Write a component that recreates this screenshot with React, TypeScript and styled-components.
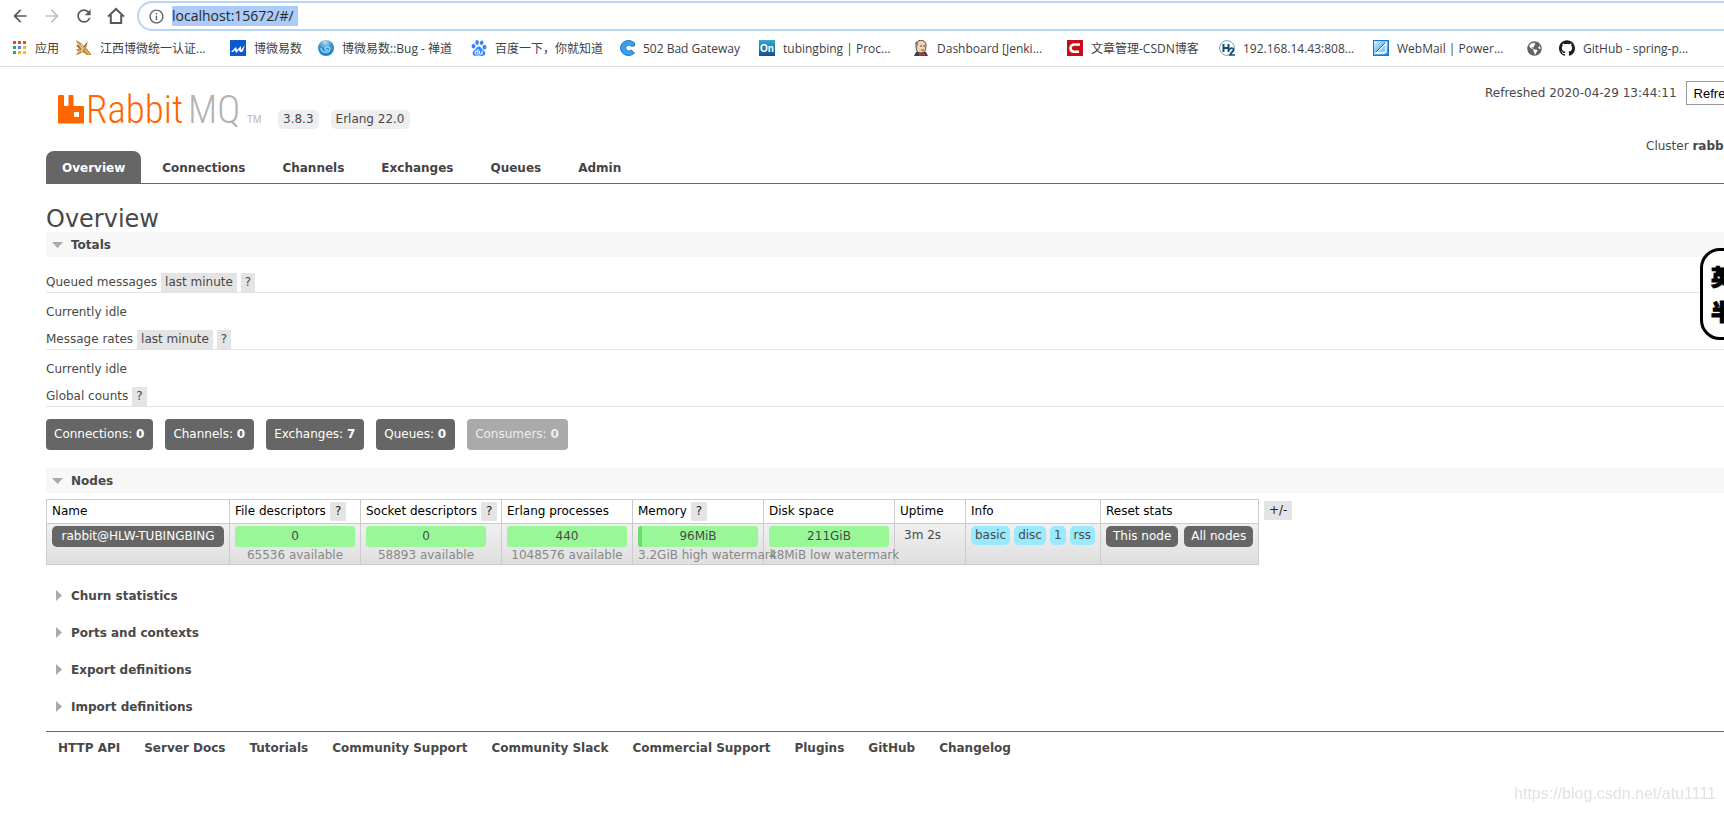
import React from "react";
import styled, { createGlobalStyle } from "styled-components";
import { MdArrowBack, MdArrowForward, MdRefresh, MdInfoOutline } from "react-icons/md";
import { FaGlobeAmericas } from "react-icons/fa";
import { SiBaidu, SiGithub } from "react-icons/si";

const GlobalStyle = createGlobalStyle`
  * { box-sizing: border-box; }
  body {
    margin: 0;
    overflow-x: hidden;
    background: #fff;
    color: #484848;
    font: 12px/18px Verdana, "DejaVu Sans", sans-serif;
  }
  a { color: inherit; text-decoration: none; }
  button, input, select { font: inherit; color: inherit; margin: 0; }
`;

/* ---------- browser chrome ---------- */

const Chrome = styled.header`
  border-bottom: 1px solid #dadce0;
  font-family: "Open Sans", "Noto Sans CJK SC", sans-serif;
  overflow: hidden;
`;
const Toolbar = styled.div`
  display: flex;
  align-items: center;
  height: 32px;
  padding: 0 0 0 10px;
`;
const NavButton = styled.button<{ $muted?: boolean }>`
  display: flex;
  width: 32px;
  height: 20px;
  padding: 0;
  border: 0;
  background: none;
  color: ${(p) => (p.$muted ? "#bdbebf" : "#55585c")};
`;
const AddressBar = styled.label`
  display: flex;
  flex: 1;
  align-items: center;
  gap: 7px;
  height: 30px;
  margin: 0 -20px 0 -1px;
  padding: 0 9px;
  border: 2px solid #b7d5f7;
  border-radius: 15px;
  color: #5f6368;
`;
const Address = styled.input`
  width: 126px;
  height: 20px;
  padding: 0;
  border: 0;
  outline: 0;
  background: #accbf7;
  color: #26282b;
  font-size: 14px;
  line-height: 20px;
`;
const Bookmarks = styled.nav`
  display: flex;
  align-items: center;
  height: 34px;
  padding: 0 0 2px 11px;
`;
const Bookmark = styled.a<{ $width: number }>`
  display: flex;
  flex: none;
  align-items: center;
  gap: 8px;
  width: ${(p) => p.$width}px;
  color: #3c4043;
  line-height: 18px;
  white-space: nowrap;
  svg { flex: none; }
`;
const BookmarkName = styled.span`
  padding-top: 2px;
`;

const HomeIcon = () => (
  <svg width="20" height="20" viewBox="0 0 20 20" fill="none" stroke="currentColor" strokeWidth="2">
    <path d="M2 10.6 10 3l8 7.600M4.800 9v8h10.400V9" />
  </svg>
);
const AppsIcon = () => (
  <svg width="16" height="16" viewBox="0 0 16 16">
    {["#ea4335", "#ea4335", "#ea4335", "#34a853", "#4285f4", "#fbbc05", "#34a853", "#fbbc05", "#fbbc05"].map((c, i) => (
      <rect key={i} x={2 + (i % 3) * 5} y={1 + Math.floor(i / 3) * 5} width="3" height="3" fill={c} />
    ))}
  </svg>
);
const StagIcon = () => (
  <svg width="17" height="16" viewBox="0 0 17 16" fill="#c08c3e">
    <path d="M1 0l5 3 3 3 4-5-2 7 2 2 3 4v1h-4l-3-2-2-1-2 2-4 1 2-4-2-1 3-2-3-2 2-1z" />
    <path d="M3 3l5 7M6 4l3 5M3 8l5 3M2 13l5-3M10 10l4 4" stroke="#f3dcae" strokeWidth="1" fill="none" />
    <path d="M2 5l4 5M9 7l3-4" stroke="#8f5f1c" strokeWidth="1" fill="none" />
  </svg>
);
const WaveIcon = () => (
  <svg width="16" height="16" viewBox="0 0 16 16">
    <rect width="16" height="16" fill="#0b5ccb" />
    <path d="M1 12l3-3 2-2 1 3 4-4v4l4-5-2 6-1 1h-2l-1-2-3 3H6l-1-3-2 2z" fill="#fff" />
  </svg>
);
const SwirlIcon = () => (
  <svg width="16" height="16" viewBox="0 0 16 16">
    <defs>
      <radialGradient id="swirl" cx="45%" cy="15%" r="80%">
        <stop offset="0" stopColor="#b9dcef" />
        <stop offset=".5" stopColor="#3f93cc" />
        <stop offset="1" stopColor="#1a86c4" />
      </radialGradient>
    </defs>
    <circle cx="8" cy="8" r="8" fill="url(#swirl)" />
    <path d="M3 8c0 5 9 6 9 1 0-3-5-3-5 0 0 2 3 2 3 0" fill="none" stroke="#8fd6f5" strokeWidth="1.300" />
  </svg>
);
const CircleCIcon = () => (
  <svg width="16" height="16" viewBox="0 0 16 16">
    <path d="M15.500 3A8 7.500 0 1 0 15.500 13L12 10a3 3 0 1 1 0-4h3.500z" fill="#35a0f4" stroke="#1c76c9" strokeWidth="1" />
  </svg>
);
const OnIcon = () => (
  <svg width="16" height="16" viewBox="0 0 16 16">
    <defs>
      <linearGradient id="on" x2="0" y2="1">
        <stop offset="0" stopColor="#38a9cd" />
        <stop offset="1" stopColor="#164f8d" />
      </linearGradient>
    </defs>
    <rect width="16" height="16" fill="url(#on)" />
    <text x="8" y="12" textAnchor="middle" fontSize="10" fontWeight="700" fontFamily="Liberation Sans" fill="#fff">On</text>
  </svg>
);
const ButlerIcon = () => (
  <svg width="16" height="16" viewBox="0 0 16 16">
    <path d="M1 16l2-4 4-1 6 1 2 4z" fill="#2c4356" />
    <path d="M3 6c0-8 10-7 10-1 0 4-1 8-5 8S3 10 3 6z" fill="#ecd5b5" stroke="#4f4338" strokeWidth="1" />
    <path d="M2 3l2-2 1 2-1 5z" fill="#777" />
    <path d="M7 6h2m1 0h2M8 10h3" stroke="#6b4a35" strokeWidth="1" />
    <path d="M6 13l3 1 3-1v3l-3-1-3 1z" fill="#d33833" />
  </svg>
);
const RedCIcon = () => (
  <svg width="16" height="16" viewBox="0 0 16 16">
    <rect width="16" height="16" fill="#ca0c16" />
    <path d="M13 4.500H7.500c-2.500 0-4 1.200-4 3.800 0 2.300 1.500 3.400 3.500 3.400h5" fill="none" stroke="#fff" strokeWidth="2.600" />
  </svg>
);
const H2Icon = () => (
  <svg width="16" height="16" viewBox="0 0 16 16">
    <circle cx="8" cy="8" r="7.400" fill="#fff" stroke="#7f9fb5" />
    <path d="M4.500 4v8M9.500 4v8M4.500 8h5" stroke="#134d75" strokeWidth="2" />
    <path d="M10.500 10c0-2.500 4.500-2.500 4 0-.3 1.500-3 3-3.500 5H16" fill="none" stroke="#134d75" strokeWidth="1.700" />
  </svg>
);
const MailIcon = () => (
  <svg width="16" height="16" viewBox="0 0 16 16">
    <defs>
      <linearGradient id="mail" x2="1" y2="1">
        <stop offset="0" stopColor="#e4f5ff" />
        <stop offset=".5" stopColor="#6cbcf8" />
        <stop offset="1" stopColor="#1f7fe0" />
      </linearGradient>
    </defs>
    <rect x=".5" y=".5" width="15" height="15" fill="url(#mail)" stroke="#1473dc" />
    <path d="M3 13 13 3v9l-2 1z" fill="#8cc8f8" stroke="#fff" strokeWidth="1.300" />
    <path d="M3 12 12 3" stroke="#325f88" strokeWidth="1" />
  </svg>
);

const bookmarks: { label: string; width: number; icon: React.ReactNode }[] = [
  { label: "应用", width: 64, icon: <AppsIcon /> },
  { label: "江西博微统一认证...", width: 155, icon: <StagIcon /> },
  { label: "博微易数", width: 88, icon: <WaveIcon /> },
  { label: "博微易数::Bug - 禅道", width: 153, icon: <SwirlIcon /> },
  { label: "百度一下，你就知道", width: 148, icon: <SiBaidu size={16} color="#3385ff" /> },
  { label: "502 Bad Gateway", width: 140, icon: <CircleCIcon /> },
  { label: "tubingbing | Proc...", width: 154, icon: <OnIcon /> },
  { label: "Dashboard [Jenki...", width: 154, icon: <ButlerIcon /> },
  { label: "文章管理-CSDN博客", width: 152, icon: <RedCIcon /> },
  { label: "192.168.14.43:808...", width: 154, icon: <H2Icon /> },
  { label: "WebMail | Power...", width: 154, icon: <MailIcon /> },
  { label: "", width: 32, icon: <FaGlobeAmericas size={15} color="#5f6368" /> },
  { label: "GitHub - spring-p...", width: 140, icon: <SiGithub size={16} color="#1b1f23" /> },
];

/* ---------- management page ---------- */

const Page = styled.div`
  padding-left: 46px;
`;
const Masthead = styled.div`
  display: flex;
  justify-content: space-between;
  height: 84px;
`;
const Brand = styled.div`
  display: flex;
  align-items: flex-end;
  gap: 12px;
  padding: 0 0 22px 12px;
`;
const Version = styled.span`
  height: 19px;
  padding: 0 5px;
  border-radius: 5px;
  background: #eee;
  line-height: 19px;
`;
const Status = styled.div`
  width: 239px;
  overflow: hidden;
  white-space: nowrap;
`;
const RefreshRow = styled.label`
  display: flex;
  align-items: center;
  gap: 9px;
  padding-top: 14px;
`;
const RefreshSelect = styled.select`
  flex: none;
  width: 180px;
  height: 24px;
  padding: 0 3px;
  border: 1px solid #999;
  background: #fff;
  color: #000;
  font: 13px "Liberation Sans", Arial, sans-serif;
`;
const Cluster = styled.div`
  padding: 32px 0 0 161px;
`;
const Tabs = styled.nav`
  display: flex;
  height: 33px;
  border-bottom: 1px solid #666;
`;
const Tab = styled.a<{ $active?: boolean }>`
  height: 32px;
  margin-right: 5px;
  padding: 0 16px;
  border-radius: 8px 8px 0 0;
  background: ${(p) => (p.$active ? "#666" : "none")};
  color: ${(p) => (p.$active ? "#fff" : "#444")};
  font-weight: 700;
  line-height: 34px;
`;
const Title = styled.h1`
  margin: 0;
  padding-top: 22px;
  font-size: 24px;
  font-weight: 400;
  line-height: 26px;
`;
const Section = styled.h2<{ $open?: boolean }>`
  display: flex;
  align-items: center;
  gap: 8px;
  height: 25px;
  margin: ${(p) => (p.$open ? "0" : "0 0 12px")};
  padding-left: 6px;
  background: ${(p) => (p.$open ? "#f7f7f7" : "none")};
  font-size: 12px;
  font-weight: 700;
`;
const Arrow = styled.svg`
  width: 11px;
  height: 11px;
  fill: #aaa;
`;
const Body = styled.div`
  padding: 13px 0 18px;
`;
const Subhead = styled.h3`
  display: flex;
  gap: 4px;
  height: 23px;
  margin: 0;
  padding-top: 3px;
  border-bottom: 1px solid #e4e4e4;
  font-size: 12px;
  font-weight: 400;
  line-height: 19px;
`;
const Chip = styled.button`
  height: 19px;
  padding: 0 4px;
  border: 0;
  background: #e4e4e4;
  line-height: 19px;
`;
const Idle = styled.p`
  margin: 0;
  padding: 10px 0 6px;
`;
const Counts = styled.div`
  display: flex;
  gap: 12px;
  padding-top: 12px;
`;
const Count = styled.a<{ $muted?: boolean }>`
  height: 31px;
  padding: 0 9px 0 8px;
  border-radius: 4px;
  background: ${(p) => (p.$muted ? "#aaa" : "#666")};
  color: ${(p) => (p.$muted ? "#eee" : "#fff")};
  line-height: 31px;
`;
const NodesArea = styled.div`
  display: flex;
  gap: 5px;
  padding: 6px 0 18px;
  ${Chip} { margin-top: 2px; padding: 0 5px; color: #222; }
`;
const NodeTable = styled.table`
  width: 1213px;
  border-collapse: collapse;
  table-layout: fixed;
  th, td {
    border: 1px solid #ccc;
    text-align: left;
    vertical-align: top;
    white-space: nowrap;
  }
  th {
    height: 24px;
    padding: 2px 5px;
    color: #000;
    font-weight: 400;
    line-height: 19px;
  }
  td { height: 41px; padding: 2px 5px 0; }
  th ${Chip} { margin: 0 0 0 4px; vertical-align: top; }
  tbody tr { background: linear-gradient(#f0f0f0, #dfdfdf); }
`;
const DarkButton = styled.button`
  height: 21px;
  padding: 0 7px;
  border: 0;
  border-radius: 5px;
  background: #666;
  color: #fff;
  line-height: 21px;
`;
const NodeLink = styled(DarkButton).attrs({ as: "a", href: "#/nodes" })`
  display: block;
  text-align: center;
`;
const Bar = styled.div<{ $used: number }>`
  width: 120px;
  height: 21px;
  border-radius: 3px;
  background: linear-gradient(to right, #6bdd6b ${(p) => p.$used}%, #98f898 ${(p) => p.$used}%);
  line-height: 21px;
  text-align: center;
`;
const Limit = styled.div`
  width: 120px;
  color: #888;
  line-height: 16px;
  text-align: center;
`;
const Row = styled.div<{ $gap: number }>`
  display: flex;
  gap: ${(p) => p.$gap}px;
`;
const Info = styled.span`
  height: 19px;
  padding: 0 4px;
  border-radius: 5px;
  background: #98eaff;
  line-height: 19px;
`;
const Uptime = styled.span`
  padding-left: 4px;
`;
const Footer = styled.footer`
  display: flex;
  gap: 24px;
  padding: 7px 12px;
  border-top: 1px solid #666;
  font-weight: 700;
`;
const InputMode = styled.aside`
  position: fixed;
  top: 248px;
  right: -26px;
  width: 50px;
  height: 92px;
  padding: 7px 0 0 8px;
  border: 3px solid #000;
  border-radius: 20px;
  background: #fff;
  color: #000;
  font: 900 22px/35px "Noto Sans CJK SC", sans-serif;
  -webkit-text-stroke: 1px #000;
`;
const Watermark = styled.span`
  position: fixed;
  right: 8px;
  bottom: 9px;
  color: #e2e2e2;
  font: 16px/20px "Liberation Sans", Arial, sans-serif;
`;
const LogoImage = styled.svg`
  width: 208px;
  height: 34px;
  overflow: visible;
  font-family: "Roboto Condensed Light", "Roboto Condensed", "Open Sans Condensed Light", Lato, sans-serif;
  font-size: 39px;
  font-weight: 300;
`;

const Logo = () => (
  <LogoImage viewBox="0 0 208 34" role="img" aria-label="RabbitMQ">
    <path
      fill="#f60"
      fillRule="evenodd"
      d="M1 0h4q1 0 1 1v9q0 1 1 1h2.500q1 0 1-1V1q0-1 1-1h3q1 0 1 1v9q0 1 1 1H25q1 0 1 1v15.500q0 1-1 1H1q-1 0-1-1V1q0-1 1-1zM17 17q-1 0-1 1v3q0 1 1 1h3q1 0 1-1v-3q0-1-1-1z"
    />
    <text x="28" y="28" fill="#f60">Rabbit</text>
    <text x="130" y="28" fill="#b3b3b3">MQ</text>
    <text x="189" y="28" fontSize="10" fontFamily="Liberation Sans" fill="#b3b3b3">TM</text>
  </LogoImage>
);

const Collapsible = ({ title, open }: { title: string; open?: boolean }) => (
  <Section $open={open}>
    <Arrow viewBox="0 0 11 11" aria-hidden>
      <path d={open ? "M0 3h11L5.500 9z" : "M4 0v11l6-5.500z"} />
    </Arrow>
    {title}
  </Section>
);

const gauges = [
  { value: "0", limit: "65536 available", used: 0 },
  { value: "0", limit: "58893 available", used: 0 },
  { value: "440", limit: "1048576 available", used: 0 },
  { value: "96MiB", limit: "3.2GiB high watermark", used: 3 },
  { value: "211GiB", limit: "48MiB low watermark", used: 0 },
];
const columns = [
  { name: "Name", width: 183 },
  { name: "File descriptors", width: 131, help: true },
  { name: "Socket descriptors", width: 141, help: true },
  { name: "Erlang processes", width: 131 },
  { name: "Memory", width: 131, help: true },
  { name: "Disk space", width: 131 },
  { name: "Uptime", width: 71 },
  { name: "Info", width: 135 },
  { name: "Reset stats", width: 158 },
];
const counts: [string, number][] = [["Connections", 0], ["Channels", 0], ["Exchanges", 7], ["Queues", 0], ["Consumers", 0]];

export default function App() {
  return (
    <>
      <GlobalStyle />
      <Chrome>
        <Toolbar>
          <NavButton aria-label="Back"><MdArrowBack size={20} /></NavButton>
          <NavButton aria-label="Forward" $muted><MdArrowForward size={20} /></NavButton>
          <NavButton aria-label="Reload"><MdRefresh size={20} /></NavButton>
          <NavButton aria-label="Home"><HomeIcon /></NavButton>
          <AddressBar>
            <MdInfoOutline size={17} />
            <Address aria-label="Address" defaultValue="localhost:15672/#/" />
          </AddressBar>
        </Toolbar>
        <Bookmarks>
          {bookmarks.map((b) => (
            <Bookmark key={b.label} href="#" $width={b.width}>
              {b.icon}
              <BookmarkName>{b.label}</BookmarkName>
            </Bookmark>
          ))}
        </Bookmarks>
      </Chrome>

      <Page>
        <Masthead>
          <Brand>
            <Logo />
            <Version>3.8.3</Version>
            <Version>Erlang 22.0</Version>
          </Brand>
          <Status>
            <RefreshRow>
              Refreshed 2020-04-29 13:44:11
              <RefreshSelect>
                <option>Refresh every 5 seconds</option>
              </RefreshSelect>
            </RefreshRow>
            <Cluster>Cluster <b>rabbit@HLW-TUBINGBING</b></Cluster>
          </Status>
        </Masthead>
        <Tabs>
          {["Overview", "Connections", "Channels", "Exchanges", "Queues", "Admin"].map((t, i) => (
            <Tab key={t} href="#" $active={i === 0}>{t}</Tab>
          ))}
        </Tabs>

        <main>
          <Title>Overview</Title>
          <Collapsible title="Totals" open />
          <Body>
            <Subhead>Queued messages <Chip>last minute</Chip><Chip>?</Chip></Subhead>
            <Idle>Currently idle</Idle>
            <Subhead>Message rates <Chip>last minute</Chip><Chip>?</Chip></Subhead>
            <Idle>Currently idle</Idle>
            <Subhead>Global counts <Chip>?</Chip></Subhead>
            <Counts>
              {counts.map(([name, n]) => (
                <Count key={name} href="#" $muted={name === "Consumers"}>{name}: <b>{n}</b></Count>
              ))}
            </Counts>
          </Body>

          <Collapsible title="Nodes" open />
          <NodesArea>
            <NodeTable>
              <colgroup>
                {columns.map((c) => <col key={c.name} style={{ width: c.width }} />)}
              </colgroup>
              <thead>
                <tr>
                  {columns.map((c) => (
                    <th key={c.name} scope="col">{c.name}{c.help && <Chip>?</Chip>}</th>
                  ))}
                </tr>
              </thead>
              <tbody>
                <tr>
                  <td><NodeLink>rabbit@HLW-TUBINGBING</NodeLink></td>
                  {gauges.map((g) => (
                    <td key={g.limit}>
                      <Bar $used={g.used}>{g.value}</Bar>
                      <Limit>{g.limit}</Limit>
                    </td>
                  ))}
                  <td><Uptime>3m 2s</Uptime></td>
                  <td>
                    <Row $gap={4}><Info>basic</Info><Info>disc</Info><Info>1</Info><Info>rss</Info></Row>
                  </td>
                  <td>
                    <Row $gap={6}><DarkButton>This node</DarkButton><DarkButton>All nodes</DarkButton></Row>
                  </td>
                </tr>
              </tbody>
            </NodeTable>
            <Chip>+/-</Chip>
          </NodesArea>

          <Collapsible title="Churn statistics" />
          <Collapsible title="Ports and contexts" />
          <Collapsible title="Export definitions" />
          <Collapsible title="Import definitions" />
        </main>

        <Footer>
          {["HTTP API", "Server Docs", "Tutorials", "Community Support", "Community Slack", "Commercial Support", "Plugins", "GitHub", "Changelog"].map((l) => (
            <a key={l} href="#">{l}</a>
          ))}
        </Footer>
      </Page>

      <InputMode>英<br />半</InputMode>
      <Watermark>https://blog.csdn.net/atu1111</Watermark>
    </>
  );
}
